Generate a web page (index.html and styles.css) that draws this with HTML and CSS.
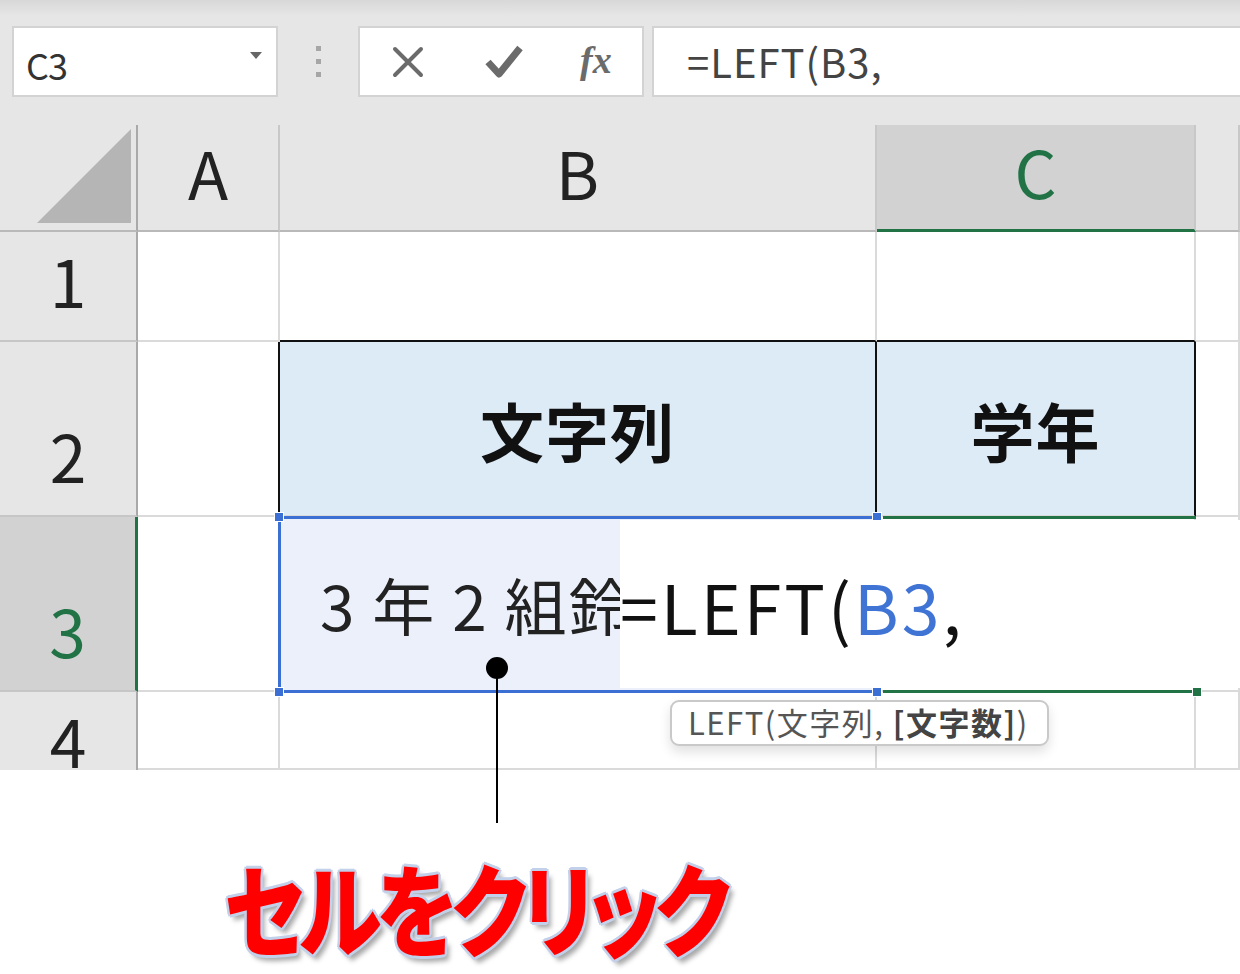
FILE: index.html
```html
<!DOCTYPE html>
<html lang="ja">
<head>
  <meta charset="UTF-8" />
  <title>LEFT関数</title>
  <link rel="stylesheet" href="styles.css">
</head>
<body>
<div class="page">

  <!-- barra de fórmulas -->
  <div class="toolbar">
    <div class="namebox">
      <span class="namebox-text">C3</span>
      <span class="dropdown"></span>
    </div>
    <div class="grip"><i></i><i></i><i></i></div>
    <div class="fxbox">
      <svg class="ico" width="36" height="36" viewBox="0 0 36 36">
        <path d="M5 5 L31 31 M31 5 L5 31" stroke="#6b6b6b" stroke-width="4" stroke-linecap="round" fill="none"/>
      </svg>
      <svg class="ico" width="40" height="36" viewBox="0 0 40 36">
        <path d="M4 18 L15 30 L36 4" stroke="#6b6b6b" stroke-width="7" stroke-linejoin="round" fill="none"/>
      </svg>
      <span class="fx">fx</span>
    </div>
    <div class="formula">=LEFT(B3,</div>
  </div>

  <!-- hoja -->
  <div class="sheet">
    <div class="hd corner"><span class="tri"></span></div>
    <div class="hd col">A</div>
    <div class="hd col">B</div>
    <div class="hd col col-sel">C</div>
    <div class="hd col"></div>

    <div class="rh">1</div>
    <div class="cell"></div>
    <div class="cell bb-black"></div>
    <div class="cell bb-black"></div>
    <div class="cell"></div>

    <div class="rh">2</div>
    <div class="cell br-black"></div>
    <div class="cell title br-black">文字列</div>
    <div class="cell title br-black">学年</div>
    <div class="cell"></div>

    <div class="rh rh-sel">3</div>
    <div class="cell"></div>
    <div class="cell b3">3 年 2 組鈴木</div>
    <div class="cell"></div>
    <div class="cell"></div>

    <div class="rh rh-last">4</div>
    <div class="cell"></div>
    <div class="cell"></div>
    <div class="cell"></div>
    <div class="cell"></div>

    <!-- selección y edición -->
    <div class="sel-b">
      <span class="h h-tl"></span><span class="h h-tr"></span>
      <span class="h h-bl"></span><span class="h h-br"></span>
    </div>
    <div class="sel-c"><span class="h h-green"></span></div>
    <div class="editor">=LEFT(<span class="ref">B3</span>,</div>
  </div>

  <div class="tip">LEFT(文字列, <b>[文字数]</b>)</div>

  <div class="pointer"><span class="dot"></span><span class="stem"></span></div>

  <div class="note"><span class="note-text">セルをクリック</span></div>
</div>
</body>
</html>
```

FILE: styles.css
```css
* {
  box-sizing: border-box;
}

body {
  margin: 0;
  background: #fff;
  font-family: "Noto Sans CJK JP", "Noto Sans", sans-serif;
  color: #222;
  overflow: hidden;
}

.page {
  position: relative;
  width: 1240px;
  height: 974px;
}

/* barra */
.toolbar {
  height: 125px;
  background: linear-gradient(#d8d8d8 0, #e6e6e6 16px);
  display: flex;
  align-items: flex-start;
  padding-top: 26px;
  padding-left: 12px;
}

.namebox {
  width: 266px;
  height: 71px;
  background: #fff;
  border: 2px solid #d3d3d3;
  display: flex;
  align-items: center;
  justify-content: space-between;
  padding: 0 14px 0 12px;
}

.namebox-text {
  font-size: 36px;
  color: #333;
  letter-spacing: -1px;
  padding-top: 4px;
}

.dropdown {
  width: 0;
  height: 0;
  border-left: 6px solid transparent;
  border-right: 6px solid transparent;
  border-top: 7px solid #666;
  margin-bottom: 12px;
}

.grip {
  width: 80px;
  height: 71px;
  display: flex;
  flex-direction: column;
  align-items: center;
  justify-content: center;
  gap: 8px;
}
.grip i {
  width: 5px;
  height: 5px;
  background: #a6a6a6;
}

.fxbox {
  width: 286px;
  height: 71px;
  background: #fff;
  border: 2px solid #d3d3d3;
  display: flex;
  align-items: center;
  padding-left: 30px;
  gap: 58px;
}

.fx {
  font-family: "Liberation Serif", serif;
  font-style: italic;
  font-weight: 700;
  font-size: 38px;
  color: #6b6b6b;
  margin-left: -2px;
  padding-bottom: 4px;
}

.formula {
  flex: 1;
  margin-left: 8px;
  margin-right: -4px;
  height: 71px;
  background: #fff;
  border: 2px solid #d3d3d3;
  font-size: 40px;
  color: #444;
  padding-left: 33px;
  line-height: 66px;
  letter-spacing: 1px;
}

/* hoja */
.sheet {
  position: relative;
  display: grid;
  grid-template-columns: 138px 142px 597px 319px 44px;
  grid-template-rows: 107px 110px 175px 175px 78px;
  background: #fff;
  overflow: hidden;
}

.hd {
  background: #e6e6e6;
  border-right: 2px solid #c8c8c8;
  border-bottom: 2px solid #b9b9b9;
  display: flex;
  align-items: center;
  justify-content: center;
  font-size: 66px;
  line-height: 1;
  color: #222;
  padding-bottom: 14px;
}

.hd:last-child {
  border-right: none;
}

.corner {
  border-right-color: #a9a9a9;
  justify-content: flex-end;
  align-items: flex-end;
  padding: 0 5px 7px 0;
}

.tri {
  width: 0;
  height: 0;
  border-left: 94px solid transparent;
  border-bottom: 94px solid #b5b5b5;
}

.col-sel {
  background: #d2d2d2;
  color: #217346;
  border-bottom: 3px solid #217346;
}

.rh {
  background: #e6e6e6;
  border-right: 2px solid #a9a9a9;
  border-bottom: 2px solid #c6c6c6;
  display: flex;
  align-items: flex-end;
  justify-content: center;
  font-size: 66px;
  line-height: 1;
  padding-bottom: 28px;
}

.rh-sel {
  background: #d2d2d2;
  color: #217346;
  border-right: 3px solid #217346;
}

.rh-last {
  align-items: flex-start;
  padding: 14px 0 0;
  border-bottom: none;
}

.cell {
  border-right: 2px solid #dadada;
  border-bottom: 2px solid #dadada;
  display: flex;
  align-items: center;
}

.bb-black {
  border-bottom-color: #111;
}

.br-black {
  border-right-color: #111;
}

.title {
  background: #ddebf7;
  justify-content: center;
  font-size: 64px;
  font-weight: 700;
  color: #111;
  letter-spacing: 1px;
}

.b3 {
  background: #ebf0fa;
  font-size: 62px;
  color: #222;
  padding-left: 40px;
  white-space: nowrap;
  overflow: hidden;
  letter-spacing: 2px;
}

.sel-b {
  position: absolute;
  left: 278px;
  top: 391px;
  width: 600px;
  height: 177px;
  border: 3px solid #3c6fd3;
}

.h {
  position: absolute;
  width: 10px;
  height: 10px;
  background: #3c6fd3;
  border: 1px solid #fff;
}
.h-tl { left: -7px; top: -7px; }
.h-tr { right: -7px; top: -7px; }
.h-bl { left: -7px; bottom: -7px; }
.h-br { right: -7px; bottom: -7px; }

.sel-c {
  position: absolute;
  left: 883px;
  top: 391px;
  width: 313px;
  height: 177px;
  border-top: 3px solid #217346;
  border-bottom: 3px solid #217346;
}

.h-green {
  right: -6px;
  bottom: -7px;
  background: #217346;
}

.editor {
  position: absolute;
  left: 620px;
  top: 395px;
  width: 620px;
  height: 168px;
  background: #fff;
  font-size: 68px;
  color: #111;
  display: flex;
  align-items: center;
  letter-spacing: 3px;
  padding-top: 2px;
}

.ref {
  color: #3f74d4;
}

/* ayuda */
.tip {
  position: absolute;
  left: 670px;
  top: 700px;
  width: 379px;
  height: 46px;
  background: #fff;
  border: 2px solid #c9c9c9;
  border-radius: 9px;
  box-shadow: 0 6px 12px rgba(0, 0, 0, 0.12);
  font-size: 31px;
  color: #555;
  padding-left: 16px;
  line-height: 40px;
  white-space: nowrap;
  letter-spacing: 1.5px;
}
.tip b {
  color: #444;
}

.pointer {
  position: absolute;
  left: 486px;
  top: 657px;
  width: 22px;
  height: 166px;
  display: flex;
  flex-direction: column;
  align-items: center;
}
.dot {
  width: 22px;
  height: 22px;
  border-radius: 50%;
  background: #000;
}
.stem {
  width: 2px;
  flex: 1;
  margin-top: -4px;
  background: #000;
}

.note {
  padding: 86px 0 0 224px;
}

.note-text {
  display: inline-block;
  transform: scaleX(0.84);
  transform-origin: left top;
  font-size: 100px;
  font-weight: 900;
  line-height: 1;
  color: #ff0000;
  font-feature-settings: "palt";
  letter-spacing: -6px;
  white-space: nowrap;
  text-shadow:
    -3px 0 0 #c2d0ea, 3px 0 0 #c2d0ea, 0 -3px 0 #c2d0ea, 0 3px 0 #c2d0ea,
    -2px -2px 0 #c2d0ea, 2px 2px 0 #c2d0ea, -2px 2px 0 #c2d0ea, 2px -2px 0 #c2d0ea,
    5px 6px 6px rgba(0, 0, 0, 0.35);
}
```
